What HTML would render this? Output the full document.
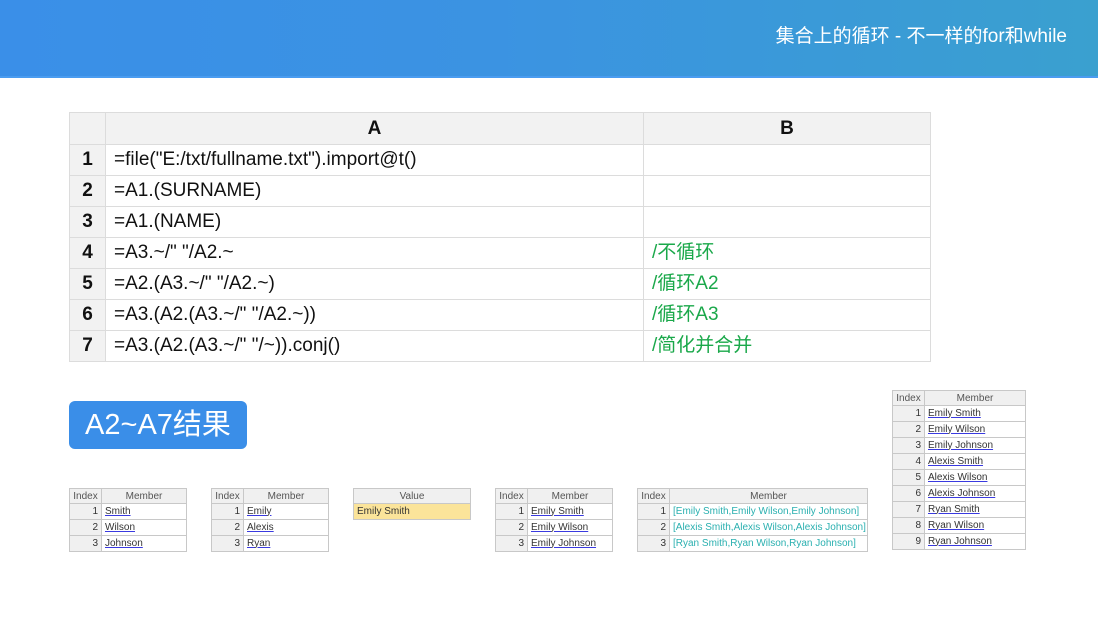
<!DOCTYPE html>
<html><head><meta charset="utf-8"><style>
*{margin:0;padding:0;box-sizing:border-box}
body{width:1098px;height:617px;background:#fff;position:relative;overflow:hidden;font-family:"Liberation Sans","Noto Sans CJK SC",sans-serif}
.hdr{position:absolute;left:0;top:0;width:1098px;height:78px;background:linear-gradient(90deg,#3a8fe8 0%,#3b93e2 45%,#3a9bd6 80%,#3aa0cf 100%);border-bottom:2px solid #4a9cf0}
.hdr span{position:absolute;right:31px;top:24px;color:#fff;font-size:19px;line-height:26px}
table{border-collapse:collapse;position:absolute;table-layout:fixed}
.main{left:69px;top:112px;width:862px}
.main td{border:1px solid #dcdcdc;height:31px;line-height:20px;font-size:19px;color:#111;padding:0 0 0 8px;overflow:hidden;white-space:nowrap}
.main tr:first-child td{background:#f2f2f2;height:32px;text-align:center;font-weight:bold;padding:0}
.main td.n{background:#f2f2f2;font-weight:bold;text-align:center;padding:0;width:36px}
.main td.g{color:#1aa84a}
.s{font-size:10px;color:#333}
.s td{border:1px solid #c8c8c8;height:16px;line-height:12px;padding:0 3px;background:#fff;white-space:nowrap}
.s th{background:#f0f0f0;border:1px solid #c8c8c8;height:15px;font-weight:normal;color:#555}
.s td.i{background:#f0f0f0;text-align:right;width:32px}
.s td u{text-decoration-color:#3a3ae0}
.s td.c{color:#2ab0b0}
.badge{position:absolute;left:69px;top:401px;width:178px;height:48px;background:#3a8ee8;border-radius:6px;color:#fff;font-size:29px;line-height:48px;text-align:center}
</style></head><body>
<div class="hdr"><span>集合上的循环 - 不一样的for和while</span></div>
<table class="main">
<tr><td style="width:36px"></td><td style="width:538px">A</td><td>B</td></tr>
<tr><td class="n">1</td><td>=file("E:/txt/fullname.txt").import@t()</td><td></td></tr>
<tr><td class="n">2</td><td>=A1.(SURNAME)</td><td></td></tr>
<tr><td class="n">3</td><td>=A1.(NAME)</td><td></td></tr>
<tr><td class="n">4</td><td>=A3.~/" "/A2.~</td><td class="g">/不循环</td></tr>
<tr><td class="n">5</td><td>=A2.(A3.~/" "/A2.~)</td><td class="g">/循环A2</td></tr>
<tr><td class="n">6</td><td>=A3.(A2.(A3.~/" "/A2.~))</td><td class="g">/循环A3</td></tr>
<tr><td class="n">7</td><td>=A3.(A2.(A3.~/" "/~)).conj()</td><td class="g">/简化并合并</td></tr>
</table>
<div class="badge">A2~A7结果</div>
<table class="s" style="left:69px;top:488px;width:118px"><tr><th style="width:32px">Index</th><th>Member</th></tr>
<tr><td class="i">1</td><td><u>Smith</u></td></tr><tr><td class="i">2</td><td><u>Wilson</u></td></tr><tr><td class="i">3</td><td><u>Johnson</u></td></tr></table>
<table class="s" style="left:211px;top:488px;width:118px"><tr><th style="width:32px">Index</th><th>Member</th></tr>
<tr><td class="i">1</td><td><u>Emily</u></td></tr><tr><td class="i">2</td><td><u>Alexis</u></td></tr><tr><td class="i">3</td><td><u>Ryan</u></td></tr></table>
<table class="s" style="left:353px;top:488px;width:118px"><tr><th>Value</th></tr>
<tr><td style="background:#fbe49a">Emily Smith</td></tr></table>
<table class="s" style="left:495px;top:488px;width:118px"><tr><th style="width:32px">Index</th><th>Member</th></tr>
<tr><td class="i">1</td><td><u>Emily Smith</u></td></tr><tr><td class="i">2</td><td><u>Emily Wilson</u></td></tr><tr><td class="i">3</td><td><u>Emily Johnson</u></td></tr></table>
<table class="s" style="left:637px;top:488px;width:231px"><tr><th style="width:32px">Index</th><th>Member</th></tr>
<tr><td class="i">1</td><td class="c">[Emily Smith,Emily Wilson,Emily Johnson]</td></tr><tr><td class="i">2</td><td class="c">[Alexis Smith,Alexis Wilson,Alexis Johnson]</td></tr><tr><td class="i">3</td><td class="c">[Ryan Smith,Ryan Wilson,Ryan Johnson]</td></tr></table>
<table class="s" style="left:892px;top:390px;width:134px"><tr><th style="width:32px">Index</th><th>Member</th></tr>
<tr><td class="i">1</td><td><u>Emily Smith</u></td></tr><tr><td class="i">2</td><td><u>Emily Wilson</u></td></tr><tr><td class="i">3</td><td><u>Emily Johnson</u></td></tr>
<tr><td class="i">4</td><td><u>Alexis Smith</u></td></tr><tr><td class="i">5</td><td><u>Alexis Wilson</u></td></tr><tr><td class="i">6</td><td><u>Alexis Johnson</u></td></tr>
<tr><td class="i">7</td><td><u>Ryan Smith</u></td></tr><tr><td class="i">8</td><td><u>Ryan Wilson</u></td></tr><tr><td class="i">9</td><td><u>Ryan Johnson</u></td></tr></table>
</body></html>
